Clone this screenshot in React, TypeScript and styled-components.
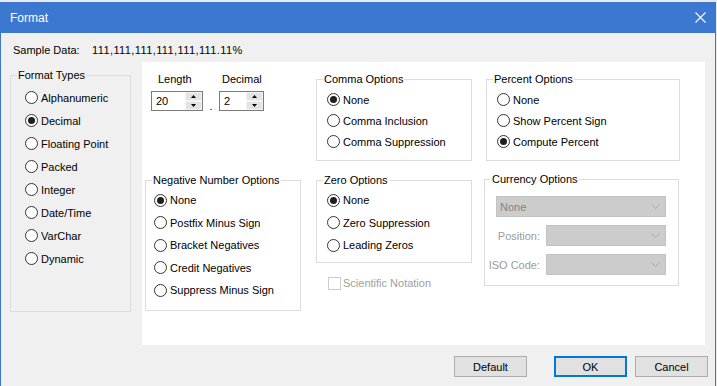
import React from 'react';
import styled, { createGlobalStyle } from 'styled-components';

const GlobalStyle = createGlobalStyle`
  html, body {
    margin: 0;
    padding: 0;
    background: #e9e9e9;
  }
  body {
    font-family: "Liberation Sans", Arial, sans-serif;
    font-size: 11px;
    color: #000;
  }
  * {
    box-sizing: border-box;
  }
`;

const formatTypes = ['Alphanumeric', 'Decimal', 'Floating Point', 'Packed', 'Integer', 'Date/Time', 'VarChar', 'Dynamic'];
const negativeOptions = ['None', 'Postfix Minus Sign', 'Bracket Negatives', 'Credit Negatives', 'Suppress Minus Sign'];
const commaOptions = ['None', 'Comma Inclusion', 'Comma Suppression'];
const percentOptions = ['None', 'Show Percent Sign', 'Compute Percent'];
const zeroOptions = ['None', 'Zero Suppression', 'Leading Zeros'];

interface IRadioGroup {
    title: string
    options: string[]
    selected: number
    width: number
    height: number
    top: number
    left: number
    row: number
    offset?: number
}

function RadioGroup(props: IRadioGroup) {
    const {title, options, selected, width, height, top, left, row, offset} = props;
    return (
        <GroupBox $w={width} $h={height} $offset={offset || 0}>
            <Legend>{title}</Legend>
            <OptionList $top={top} $left={left}>
                {options.map((o, i) => (
                    <Option key={`${title}-${i}`} $row={row}>
                        <Radio $checked={i === selected} />
                        <span>{o}</span>
                    </Option>
                ))}
            </OptionList>
        </GroupBox>
    )
}

function ArrowUp() {
    return (
        <svg width="5" height="3" viewBox="0 0 5 3">
            <polygon points="2.5,0 5,3 0,3" fill="#000" />
        </svg>
    )
}

function ArrowDown() {
    return (
        <svg width="5" height="3" viewBox="0 0 5 3">
            <polygon points="0,0 5,0 2.5,3" fill="#000" />
        </svg>
    )
}

function Chevron() {
    return (
        <svg width="9" height="5" viewBox="0 0 9 5">
            <polyline points="0.5,0.5 4.5,4.5 8.5,0.5" fill="none" stroke="#a9a9a9" strokeWidth="1" />
        </svg>
    )
}

function SpinBox({value, width}: {value: string, width: number}) {
    return (
        <Spin $w={width}>
            <SpinText>{value}</SpinText>
            <SpinButtons>
                <SpinBtn><ArrowUp /></SpinBtn>
                <SpinBtn><ArrowDown /></SpinBtn>
            </SpinButtons>
        </Spin>
    )
}

export default function App() {
    return (
        <>
            <GlobalStyle />
            <Window>
                <TitleBar>
                    <span>Format</span>
                    <svg width="11" height="11" viewBox="0 0 11 11">
                        <path d="M0.5 0.5 L10.5 10.5 M10.5 0.5 L0.5 10.5" stroke="#fff" strokeWidth="1.1" />
                    </svg>
                </TitleBar>
                <Body>
                    <SampleRow>
                        <SampleLabel>Sample Data:</SampleLabel>
                        <SampleValue>111,111,111,111,111,111.11%</SampleValue>
                    </SampleRow>
                    <MainRow>
                        <RadioGroup title="Format Types" options={formatTypes} selected={1}
                                    width={121} height={245} top={3} left={14} row={23} offset={5} />
                        <Panel>
                            <SizeRow>
                                <Field>
                                    <FieldLabel $indent={7}>Length</FieldLabel>
                                    <SpinBox value="20" width={52} />
                                </Field>
                                <Dot>.</Dot>
                                <Field>
                                    <FieldLabel $indent={3}>Decimal</FieldLabel>
                                    <SpinBox value="2" width={45} />
                                </Field>
                            </SizeRow>
                            <RadioGroup title="Comma Options" options={commaOptions} selected={0}
                                        width={156} height={90} top={2} left={10} row={21} />
                            <RadioGroup title="Percent Options" options={percentOptions} selected={2}
                                        width={194} height={90} top={2} left={10} row={21} />
                            <RadioGroup title="Negative Number Options" options={negativeOptions} selected={0}
                                        width={156} height={139} top={1} left={8} row={22.5} />
                            <Stack>
                                <RadioGroup title="Zero Options" options={zeroOptions} selected={0}
                                            width={156} height={91} top={1} left={10} row={22.5} />
                                <CheckRow>
                                    <CheckBox />
                                    <span>Scientific Notation</span>
                                </CheckRow>
                            </Stack>
                            <CurrencyBox $w={195} $h={115} $offset={-1}>
                                <Legend>Currency Options</Legend>
                                <CurrencyBody>
                                    <Combo $w={170}>
                                        <span>None</span>
                                        <Chevron />
                                    </Combo>
                                    <ComboRow>
                                        <DimLabel>Position:</DimLabel>
                                        <Combo $w={120}><span /><Chevron /></Combo>
                                    </ComboRow>
                                    <ComboRow>
                                        <DimLabel>ISO Code:</DimLabel>
                                        <Combo $w={120}><span /><Chevron /></Combo>
                                    </ComboRow>
                                </CurrencyBody>
                            </CurrencyBox>
                        </Panel>
                    </MainRow>
                    <ButtonRow>
                        <Button $gap={27}>Default</Button>
                        <Button $gap={8} $primary>OK</Button>
                        <Button $gap={0}>Cancel</Button>
                    </ButtonRow>
                </Body>
            </Window>
        </>
    )
}

const Window = styled.div`
  margin-top: 2px;
  width: 716px;
  height: 384px;
  display: flex;
  flex-direction: column;
  background: #f0f0f0;
  border-left: 1px solid #3d78d0;
  border-right: 1px solid #3d78d0;
`

const TitleBar = styled.div`
  height: 31px;
  flex-shrink: 0;
  background: #3d78d0;
  color: #fff;
  font-size: 12px;
  display: flex;
  align-items: center;
  justify-content: space-between;
  padding: 0 9px 0 9px;
`

const Body = styled.div`
  flex: 1;
  display: flex;
  flex-direction: column;
  padding: 10px 0 0 9px;
`

const SampleRow = styled.div`
  display: flex;
  line-height: 14px;
  padding-left: 3px;
`

const SampleLabel = styled.span`
  width: 79px;
`

const SampleValue = styled.span`
  letter-spacing: 0.4px;
`

const MainRow = styled.div`
  display: flex;
  align-items: flex-start;
  gap: 11px;
  margin: 5px 10px 0 0;
`

const Panel = styled.div`
  flex: 1;
  height: 283px;
  background: #fff;
  padding: 9px 0 0 3px;
  display: grid;
  grid-template-columns: 171px 170px 1fr;
  grid-template-rows: 90px auto;
  row-gap: 11px;
  align-items: start;
`

const GroupBox = styled.fieldset<{ $w: number, $h: number, $offset: number }>`
  margin: ${p => p.$offset}px 0 0 0;
  padding: 0;
  min-width: 0;
  width: ${p => p.$w}px;
  height: ${p => p.$h}px;
  border: 1px solid #dcdcdc;
`

const CurrencyBox = styled(GroupBox)`
  margin-left: -2px;
`

const Legend = styled.legend`
  margin-left: 6px;
  padding: 0 1px;
  line-height: 16px;
`

const OptionList = styled.div<{ $top: number, $left: number }>`
  display: flex;
  flex-direction: column;
  padding: ${p => p.$top}px 0 0 ${p => p.$left}px;
`

const Option = styled.label<{ $row: number }>`
  display: flex;
  align-items: center;
  gap: 3px;
  height: ${p => p.$row}px;
  white-space: nowrap;
`

const Radio = styled.span<{ $checked: boolean }>`
  width: 13px;
  height: 13px;
  flex-shrink: 0;
  border: 1px solid #333;
  border-radius: 50%;
  background: #fff;
  display: flex;
  align-items: center;
  justify-content: center;
  &::after {
    content: "";
    display: ${p => p.$checked ? 'block' : 'none'};
    width: 7px;
    height: 7px;
    border-radius: 50%;
    background: #1f1f1f;
  }
`

const SizeRow = styled.div`
  display: flex;
  padding-left: 6px;
`

const Field = styled.div`
  display: flex;
  flex-direction: column;
  gap: 4px;
`

const FieldLabel = styled.span<{ $indent: number }>`
  line-height: 16px;
  padding-left: ${p => p.$indent}px;
`

const Dot = styled.span`
  width: 16px;
  text-align: center;
  align-self: flex-end;
  line-height: 14px;
  margin-bottom: -2px;
`

const Spin = styled.div<{ $w: number }>`
  width: ${p => p.$w}px;
  height: 20px;
  border: 1px solid #7a7a7a;
  background: #fff;
  display: flex;
`

const SpinText = styled.span`
  flex: 1;
  padding-left: 4px;
  line-height: 18px;
`

const SpinButtons = styled.div`
  width: 17px;
  display: flex;
  flex-direction: column;
`

const SpinBtn = styled.div`
  flex: 1;
  background: #e3e3e3;
  border: 1px solid #f4f4f4;
  display: flex;
  align-items: center;
  justify-content: center;
`

const Stack = styled.div`
  display: flex;
  flex-direction: column;
`

const CheckRow = styled.div`
  display: flex;
  align-items: center;
  gap: 2px;
  height: 16px;
  margin: 12px 0 0 12px;
  color: #a0a0a0;
`

const CheckBox = styled.span`
  width: 13px;
  height: 13px;
  border: 1px solid #cccccc;
  background: #fff;
`

const CurrencyBody = styled.div`
  display: flex;
  flex-direction: column;
  gap: 8px;
  padding: 9px 0 0 11px;
`

const ComboRow = styled.div`
  width: 170px;
  display: flex;
  align-items: center;
  justify-content: flex-end;
  gap: 6px;
`

const DimLabel = styled.span`
  color: #9b9b9b;
  white-space: nowrap;
`

const Combo = styled.div<{ $w: number }>`
  width: ${p => p.$w}px;
  height: 21px;
  flex-shrink: 0;
  background: #cccccc;
  border: 1px solid #c3c3c3;
  color: #838383;
  display: flex;
  align-items: center;
  justify-content: space-between;
  padding: 0 5px 0 3px;
`

const ButtonRow = styled.div`
  display: flex;
  justify-content: flex-end;
  margin-top: 11px;
  padding-right: 7px;
`

const Button = styled.div<{ $gap: number, $primary?: boolean }>`
  width: 73px;
  height: 21px;
  margin-right: ${p => p.$gap}px;
  background: #e1e1e1;
  border: ${p => p.$primary ? '2px solid #0078d7' : '1px solid #adadad'};
  display: flex;
  align-items: center;
  justify-content: center;
`
